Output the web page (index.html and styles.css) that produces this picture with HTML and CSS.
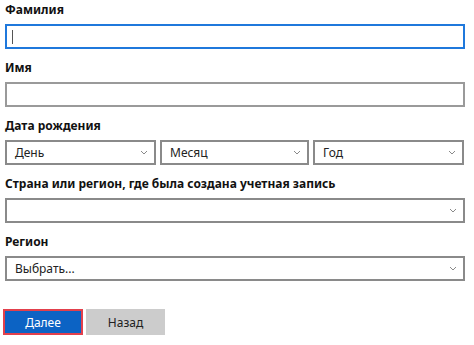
FILE: index.html
```html
<!DOCTYPE html>
<html lang="ru">
<head>
    <meta charset="UTF-8">
    <meta name="viewport" content="width=device-width, initial-scale=1.0">
    <title>Учетная запись</title>
    <link rel="stylesheet" href="styles.css">
</head>
<body>
    <form class="account-form">
        <div class="form-group">
            <label>Фамилия</label>
            <div class="text-box focused"><span class="caret"></span></div>
        </div>

        <div class="form-group">
            <label>Имя</label>
            <div class="text-box"></div>
        </div>

        <div class="form-group">
            <label>Дата рождения</label>
            <div class="date-row">
                <div class="select-box">
                    <span>День</span>
                    <svg class="chevron" width="8" height="5" viewBox="0 0 8 5"><polyline points="1,1 4,4 7,1" /></svg>
                </div>
                <div class="select-box">
                    <span>Месяц</span>
                    <svg class="chevron" width="8" height="5" viewBox="0 0 8 5"><polyline points="1,1 4,4 7,1" /></svg>
                </div>
                <div class="select-box">
                    <span>Год</span>
                    <svg class="chevron" width="8" height="5" viewBox="0 0 8 5"><polyline points="1,1 4,4 7,1" /></svg>
                </div>
            </div>
        </div>

        <div class="form-group">
            <label>Страна или регион, где была создана учетная запись</label>
            <div class="select-box">
                <span></span>
                <svg class="chevron" width="8" height="5" viewBox="0 0 8 5"><polyline points="1,1 4,4 7,1" /></svg>
            </div>
        </div>

        <div class="form-group">
            <label>Регион</label>
            <div class="select-box">
                <span>Выбрать...</span>
                <svg class="chevron" width="8" height="5" viewBox="0 0 8 5"><polyline points="1,1 4,4 7,1" /></svg>
            </div>
        </div>

        <div class="buttons">
            <button type="button" class="btn btn-next">Далее</button>
            <button type="button" class="btn btn-back">Назад</button>
        </div>
    </form>
</body>
</html>
```

FILE: styles.css
```css
* {
    margin: 0;
    padding: 0;
    box-sizing: border-box;
}

body {
    font-family: "Noto Sans", "Open Sans", sans-serif;
    background: white;
    color: #1a1a1a;
}

.account-form {
    width: 474px;
    padding: 0 9px 0 5px;
}

.form-group {
    margin-bottom: 9px;
}

.form-group label {
    display: block;
    height: 20px;
    line-height: 20px;
    margin-bottom: 4px;
    font-size: 12px;
    font-weight: 700;
    color: #111;
}

.text-box {
    height: 25px;
    border: 2px solid #9a9a9a;
    background: white;
    position: relative;
}

.text-box.focused {
    border-color: #1f78dc;
}

.caret {
    position: absolute;
    left: 5px;
    top: 4px;
    width: 1px;
    height: 14px;
    background: #555;
}

.date-row {
    display: grid;
    grid-template-columns: 151px 149px 151px;
    column-gap: 4px;
}

.select-box {
    height: 25px;
    border: 2px solid #8a8a8a;
    display: flex;
    align-items: center;
    justify-content: space-between;
    padding: 0 6px 0 8px;
    font-size: 12px;
    color: #222;
}

.chevron {
    fill: none;
    stroke: #8a8a8a;
    stroke-width: 1;
}

.buttons {
    display: flex;
    gap: 3px;
    margin-top: 28px;
    margin-left: -2px;
}

.btn {
    width: 80px;
    height: 26px;
    border: none;
    font-family: "Noto Sans", "Open Sans", sans-serif;
    font-size: 12px;
}

.btn-next {
    background: #0c63c4;
    color: white;
    border: 2px solid #e2404c;
}

.btn-back {
    width: 79px;
    background: #cccccc;
    color: #222;
}
```
